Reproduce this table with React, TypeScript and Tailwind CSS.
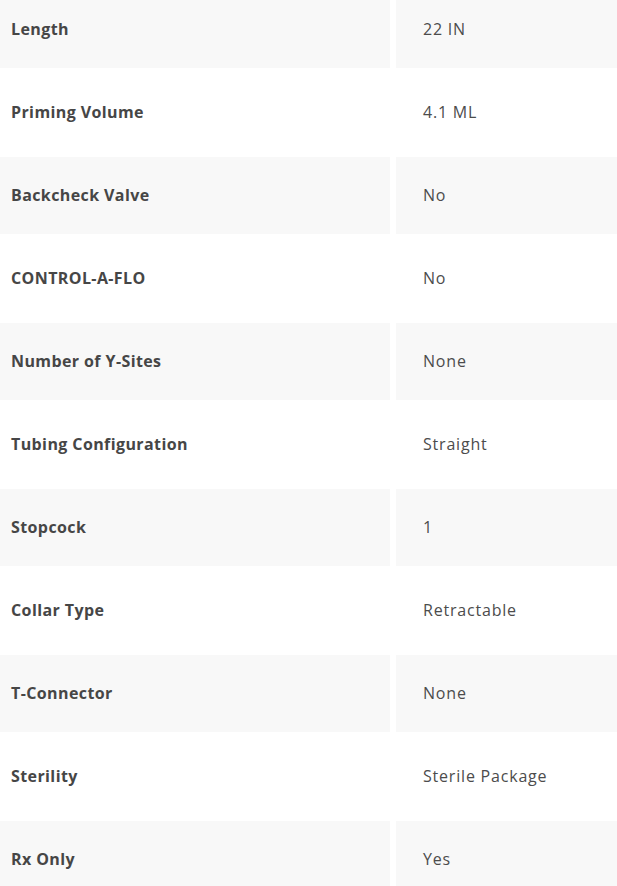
const specs: [string, string][] = [
  ["Length", "22 IN"],
  ["Priming Volume", "4.1 ML"],
  ["Backcheck Valve", "No"],
  ["CONTROL-A-FLO", "No"],
  ["Number of Y-Sites", "None"],
  ["Tubing Configuration", "Straight"],
  ["Stopcock", "1"],
  ["Collar Type", "Retractable"],
  ["T-Connector", "None"],
  ["Sterility", "Sterile Package"],
  ["Rx Only", "Yes"],
];

export default function App() {
  return (
    <div className="h-[886px] w-[617px] overflow-hidden bg-white font-['Open_Sans',sans-serif] text-[16px] text-[#464646]">
      <div className="-mt-[9px] grid grid-cols-[390px_1fr] gap-[6px]">
        {specs.map(([label, value], i) => {
          const shaded = i % 2 === 0;
          return (
            <div key={label} className="contents">
              <div
                className={
                  "flex h-[77px] items-center pb-[2px] pl-[11px] font-bold tracking-[0.4px] " +
                  (shaded ? "bg-[#f8f8f8]" : "bg-white")
                }
              >
                {label}
              </div>
              <div
                className={
                  "flex h-[77px] items-center pb-[2px] pl-[27px] tracking-[0.8px] text-[#4c4c4c] " +
                  (shaded ? "bg-[#f8f8f8]" : "bg-white")
                }
              >
                {value}
              </div>
            </div>
          );
        })}
      </div>
    </div>
  );
}
